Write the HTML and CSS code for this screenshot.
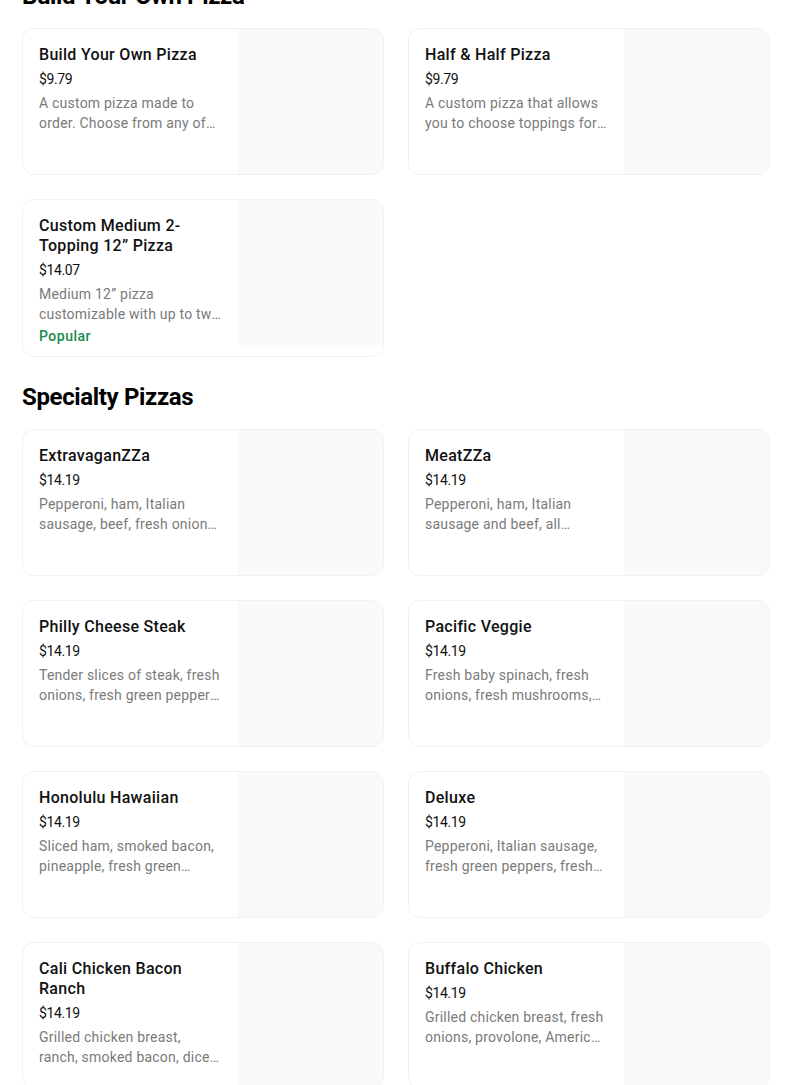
FILE: index.html
```html
<!DOCTYPE html>
<html lang="en">
<head>
<meta charset="utf-8">
<title>Menu</title>
<link rel="stylesheet" href="styles.css">
</head>
<body>
<main class="menu">
  <section class="section section-first">
    <h2 class="section-title">Build Your Own Pizza</h2>
    <div class="grid">
      <div class="card">
        <div class="info">
          <div class="name">Build Your Own Pizza</div>
          <div class="price">$9.79</div>
          <div class="desc">A custom pizza made to order. Choose from any of our crusts, sauces and toppings.</div>
        </div>
        <div class="thumb"></div>
      </div>
      <div class="card">
        <div class="info">
          <div class="name">Half &amp; Half Pizza</div>
          <div class="price">$9.79</div>
          <div class="desc">A custom pizza that allows you to choose toppings for each half of the pizza.</div>
        </div>
        <div class="thumb"></div>
      </div>
      <div class="card">
        <div class="info">
          <div class="name">Custom Medium 2-Topping 12” Pizza</div>
          <div class="price">$14.07</div>
          <div class="desc">Medium 12” pizza customizable with up to two toppings of your choice.</div>
          <div class="tag">Popular</div>
        </div>
        <div class="thumb"></div>
      </div>
    </div>
  </section>
  <section class="section">
    <h2 class="section-title">Specialty Pizzas</h2>
    <div class="grid">
      <div class="card">
        <div class="info">
          <div class="name">ExtravaganZZa</div>
          <div class="price">$14.19</div>
          <div class="desc">Pepperoni, ham, Italian sausage, beef, fresh onions, fresh green peppers, fresh mushrooms and black olives.</div>
        </div>
        <div class="thumb"></div>
      </div>
      <div class="card">
        <div class="info">
          <div class="name">MeatZZa</div>
          <div class="price">$14.19</div>
          <div class="desc">Pepperoni, ham, Italian sausage and beef, all sandwiched between provolone and mozzarella.</div>
        </div>
        <div class="thumb"></div>
      </div>
      <div class="card">
        <div class="info">
          <div class="name">Philly Cheese Steak</div>
          <div class="price">$14.19</div>
          <div class="desc">Tender slices of steak, fresh onions, fresh green peppers, fresh mushrooms and provolone.</div>
        </div>
        <div class="thumb"></div>
      </div>
      <div class="card">
        <div class="info">
          <div class="name">Pacific Veggie</div>
          <div class="price">$14.19</div>
          <div class="desc">Fresh baby spinach, fresh onions, fresh mushrooms, tomatoes, black olives and roasted red peppers.</div>
        </div>
        <div class="thumb"></div>
      </div>
      <div class="card">
        <div class="info">
          <div class="name">Honolulu Hawaiian</div>
          <div class="price">$14.19</div>
          <div class="desc">Sliced ham, smoked bacon, pineapple, fresh green peppers, roasted red peppers and provolone.</div>
        </div>
        <div class="thumb"></div>
      </div>
      <div class="card">
        <div class="info">
          <div class="name">Deluxe</div>
          <div class="price">$14.19</div>
          <div class="desc">Pepperoni, Italian sausage, fresh green peppers, fresh mushrooms and fresh onions.</div>
        </div>
        <div class="thumb"></div>
      </div>
      <div class="card">
        <div class="info">
          <div class="name">Cali Chicken Bacon Ranch</div>
          <div class="price">$14.19</div>
          <div class="desc">Grilled chicken breast, ranch, smoked bacon, diced tomatoes and provolone.</div>
        </div>
        <div class="thumb"></div>
      </div>
      <div class="card">
        <div class="info">
          <div class="name">Buffalo Chicken</div>
          <div class="price">$14.19</div>
          <div class="desc">Grilled chicken breast, fresh onions, provolone, American cheese, cheddar and hot buffalo sauce.</div>
        </div>
        <div class="thumb"></div>
      </div>
    </div>
  </section>
</main>
</body>
</html>
```

FILE: styles.css
```css
* { box-sizing: border-box; }
html, body { margin: 0; padding: 0; background: #fff; }
body {
  font-family: Roboto, "Liberation Sans", Arial, sans-serif;
  color: #000;
  overflow: hidden;
}
.menu {
  width: 748px;
  margin-left: 22px;
}
.section { margin-top: 24px; }
.section-first { margin-top: -20px; }
.section-title {
  margin: 0 0 16px;
  font-size: 24px;
  line-height: 32px;
  font-weight: 700;
  letter-spacing: -0.35px;
}
.grid {
  display: grid;
  grid-template-columns: 1fr 1fr;
  column-gap: 24px;
  row-gap: 24px;
  align-items: start;
}
.card {
  display: flex;
  align-items: flex-start;
  border: 1px solid #f1f1f1;
  border-radius: 12px;
  overflow: hidden;
  background: #fff;
}
.info {
  flex: 1;
  min-width: 0;
  padding: 16px 16px 12px;
}
.name {
  font-size: 16px;
  line-height: 20px;
  font-weight: 500;
  letter-spacing: 0.3px;
  color: #111;
}
.price {
  margin-top: 4px;
  font-size: 14px;
  line-height: 20px;
  letter-spacing: -0.4px;
  color: #111;
}
.desc {
  margin-top: 4px;
  font-size: 14px;
  line-height: 20px;
  letter-spacing: 0.22px;
  color: #7a7a7a;
  display: -webkit-box;
  -webkit-line-clamp: 2;
  -webkit-box-orient: vertical;
  overflow: hidden;
}
.tag {
  margin-top: 4px;
  font-size: 14px;
  line-height: 16px;
  font-weight: 500;
  letter-spacing: 0.5px;
  color: #1a8a4e;
}
.thumb {
  flex: 0 0 145px;
  width: 145px;
  height: 145px;
  background: #f9f9f9;
}
```
